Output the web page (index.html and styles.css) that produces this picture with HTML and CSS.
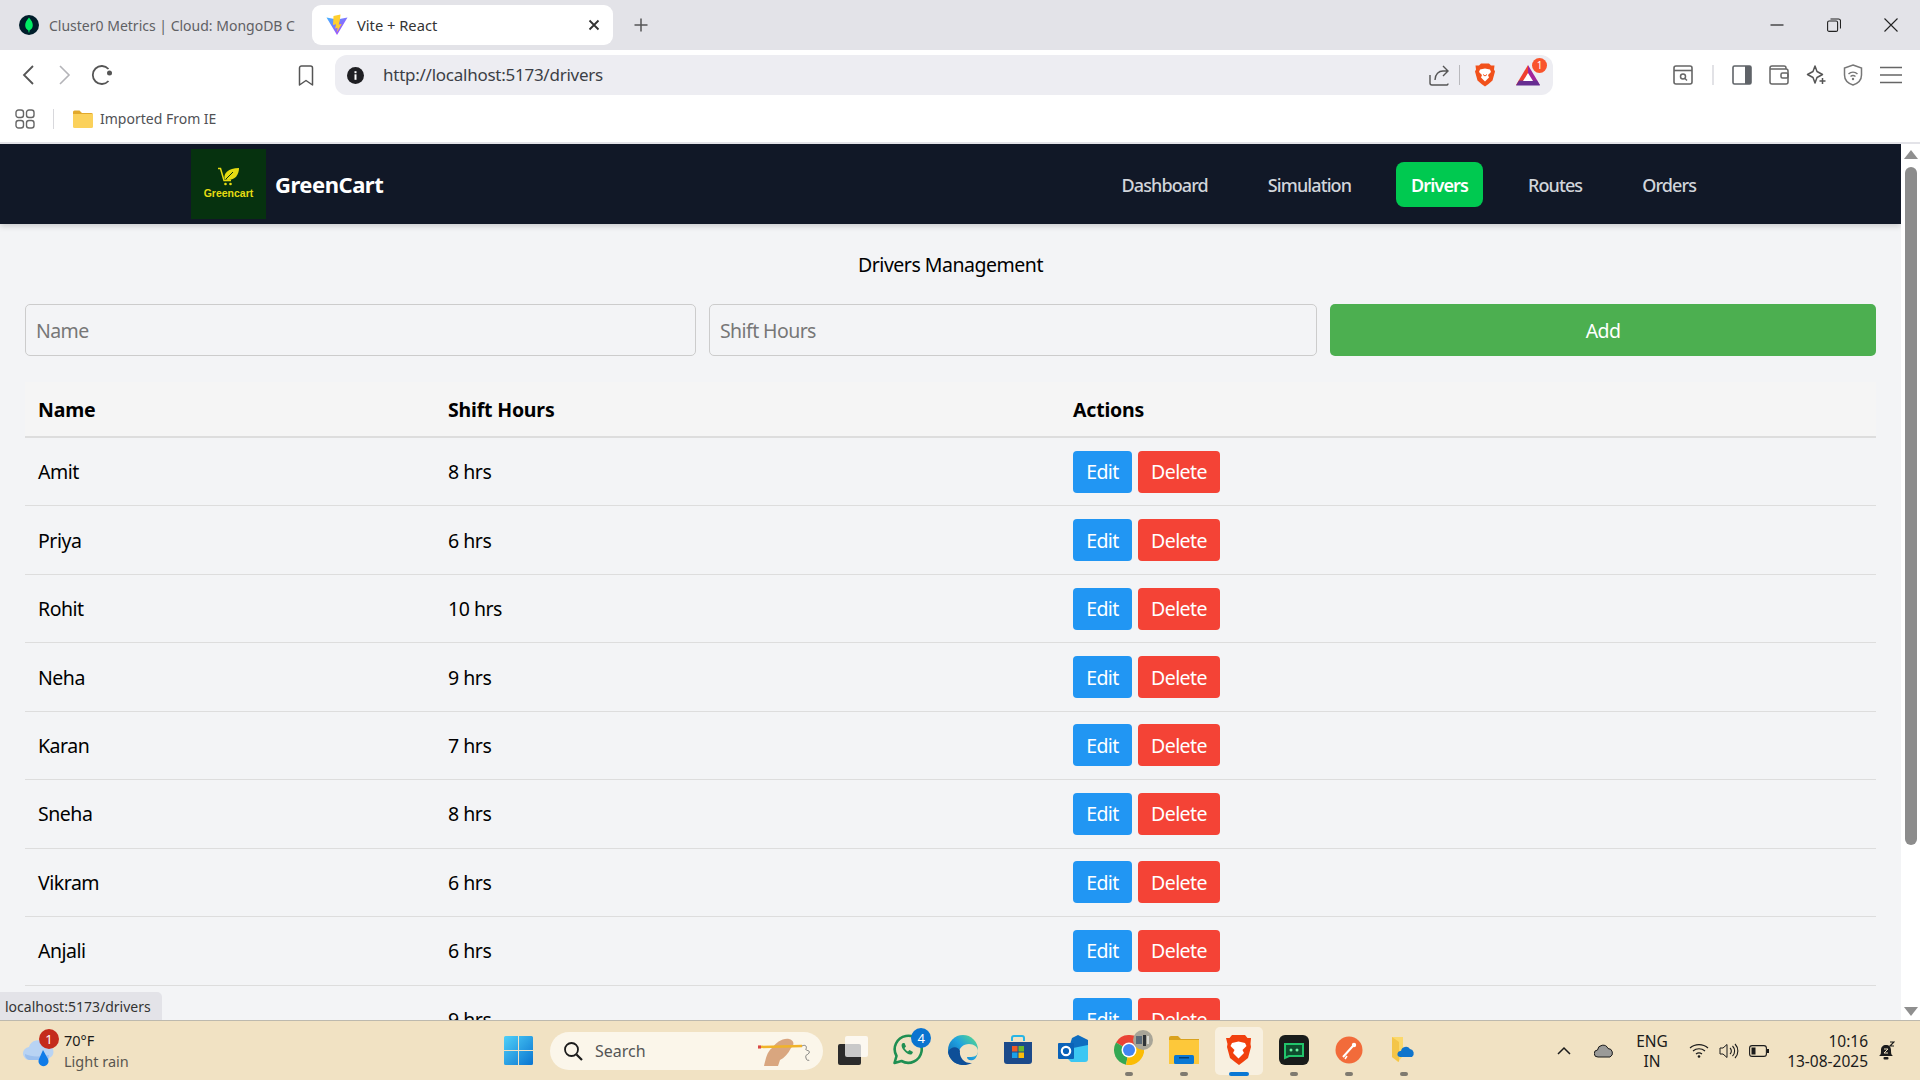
FILE: index.html
```html
<!DOCTYPE html>
<html lang="en">
<head>
<meta charset="utf-8">
<title>Vite + React</title>
<link rel="stylesheet" href="styles.css">
</head>
<body>
<div class="screen">

  <header class="tabstrip">
    <div class="tab tab-inactive">
      <svg class="favicon" width="20" height="20" viewBox="0 0 20 20"><circle cx="10" cy="10" r="10" fill="#001e2b"/><path d="M10 2.500c2.600 3 3.800 5.400 3.800 7.700 0 2.600-1.500 4.300-3.300 5.200l-.2 2.100h-.7l-.2-2.100c-1.800-.9-3.200-2.600-3.200-5.200 0-2.300 1.200-4.700 3.800-7.700z" fill="#00ed64"/></svg>
      <span class="tab-title tab-title-faded">Cluster0 Metrics | Cloud: MongoDB C</span>
    </div>
    <div class="tab tab-active">
      <svg class="favicon" width="22" height="22" viewBox="0 0 22 22"><defs><linearGradient id="vt" x1="0" y1="0" x2="1" y2="1"><stop offset="0" stop-color="#41b5ff"/><stop offset="1" stop-color="#bd34fe"/></linearGradient></defs><path d="M0.500 3.500 11 5.500 21.500 3.500 11 21z" fill="url(#vt)"/><path d="M14.500 0.500 7.500 2 7 11l3-.7-.8 4.200 2.500-.7-1 4.700 5-8.500-3 .6 1.100-4z" fill="#ffcf2e"/></svg>
      <span class="tab-title">Vite + React</span>
      <svg class="tab-close" width="12" height="12" viewBox="0 0 12 12"><path d="M1.500 1.500l9 9M10.500 1.500l-9 9" stroke="#333" stroke-width="1.800" fill="none"/></svg>
    </div>
    <svg class="tab-new" width="16" height="16" viewBox="0 0 16 16"><path d="M8 1.500v13M1.500 8h13" stroke="#555" stroke-width="1.500" fill="none"/></svg>
    <div class="window-controls">
      <svg width="14" height="14" viewBox="0 0 14 14"><path d="M0.500 7h13" stroke="#222" stroke-width="1.200"/></svg>
      <svg width="14" height="14" viewBox="0 0 14 14"><rect x="0.600" y="3" width="10" height="10.400" rx="1.500" stroke="#222" stroke-width="1.100" fill="none"/><path d="M3.500 1h8a2 2 0 0 1 2 2v7.500" stroke="#222" stroke-width="1.100" fill="none"/></svg>
      <svg width="14" height="14" viewBox="0 0 14 14"><path d="M0.500 0.500l13 13M13.500 0.500l-13 13" stroke="#222" stroke-width="1.100" fill="none"/></svg>
    </div>
  </header>

  <div class="toolbar">
    <div class="tool-slot"><svg width="12" height="20" viewBox="0 0 12 20"><path d="M11 1 2 10l9 9" stroke="#555" stroke-width="1.800" fill="none"/></svg></div>
    <div class="tool-slot"><svg width="12" height="20" viewBox="0 0 12 20"><path d="M1 1l9 9-9 9" stroke="#b4b4b8" stroke-width="1.600" fill="none"/></svg></div>
    <div class="tool-slot"><svg width="22" height="22" viewBox="0 0 22 22"><path d="M17.500 5A9 9 0 1 0 17.500 17" stroke="#555" stroke-width="1.800" fill="none"/><circle cx="18.500" cy="9" r="2.500" fill="#555"/></svg></div>
    <div class="tool-slot slot-bookmark"><svg width="16" height="21" viewBox="0 0 16 21"><path d="M1.500 3a2 2 0 0 1 2-2h9a2 2 0 0 1 2 2v17L8 15.500 1.500 20z" stroke="#555" stroke-width="1.500" fill="none" stroke-linejoin="round"/></svg></div>
    <div class="urlbar">
      <svg class="url-info" width="17" height="17" viewBox="0 0 17 17"><circle cx="8.500" cy="8.500" r="8.500" fill="#1f1f23"/><rect x="7.500" y="7.300" width="2" height="5.500" fill="#fff"/><rect x="7.500" y="4.200" width="2" height="2" fill="#fff"/></svg>
      <span class="url-text">http://localhost:5173/drivers</span>
      <svg class="url-share" width="20" height="21" viewBox="0 0 20 21"><path d="M1 10v8a2 2 0 0 0 2 2h15a1.500 1.500 0 0 0 1-1.500" stroke="#555" stroke-width="1.400" fill="none"/><path d="M6 15c0-6 4-9 8-9h4M14 1l5 5-5 5" stroke="#555" stroke-width="1.400" fill="none"/></svg>
      <span class="url-divider"></span>
      <svg class="url-brave" width="20" height="24" viewBox="0 0 20 24"><path d="M6 0.500h8l2 2 3.500 0-.5 4 1 2-2.500 9-4 3.500-3.500 2.500-3.500-2.500-4-3.500L0 8.500l1-2L0.500 2.500 4 2.500z" fill="#f1511b"/><path d="M5 6.500l5-1 5 1 1 2.500-3 3 1 2.500-4 4-4-4 1-2.500-3-3z" fill="#fff"/><path d="M8 11.500l2 1.500 2-1.500" stroke="#f1511b" stroke-width="1" fill="none"/></svg>
      <div class="url-bat">
        <svg width="24" height="21" viewBox="0 0 24 21"><path d="M12 0 0 20h6L12 9z" fill="#f0402f"/><path d="M12 0l12 20h-6L12 9z" fill="#a2239a"/><path d="M0 20.500h24l-3-5H3z" fill="#662d91"/><path d="M12 8l-5 8h10z" fill="#fff"/></svg>
        <span class="bat-badge">1</span>
      </div>
    </div>
    <div class="tool-right">
      <svg width="20" height="20" viewBox="0 0 20 20"><rect x="1" y="1" width="18" height="18" rx="2" stroke="#666" stroke-width="1.600" fill="none"/><path d="M1 5.500h18" stroke="#666" stroke-width="1.600"/><circle cx="10" cy="11.500" r="2.500" stroke="#666" stroke-width="1.500" fill="none"/><path d="M12 13.500l2 2" stroke="#666" stroke-width="1.500"/></svg>
      <span class="tool-divider"></span>
      <svg class="tool-sidebar" width="20" height="20" viewBox="0 0 20 20"><rect x="1" y="1" width="18" height="18" rx="1.500" stroke="#5f6368" stroke-width="1.600" fill="none"/><rect x="13" y="1" width="6" height="18" fill="#5f6368"/></svg>
      <svg width="20" height="20" viewBox="0 0 20 20"><path d="M17 4V3a2 2 0 0 0-2-2H3a2 2 0 0 0-2 2v14a2 2 0 0 0 2 2h14a2 2 0 0 0 2-2V6a2 2 0 0 0-2-2H1" stroke="#666" stroke-width="1.500" fill="none"/><rect x="12" y="8" width="7" height="5" rx="1.500" stroke="#666" stroke-width="1.500" fill="none"/></svg>
      <svg width="20" height="20" viewBox="0 0 20 20"><path d="M9 1l2 5.500 5.500 3-5.500 3L9 18l-2-5.500-5.500-3L7 6.500z" stroke="#555" stroke-width="1.500" fill="none" stroke-linejoin="round"/><path d="M16.500 13v6M13.500 16h6" stroke="#555" stroke-width="1.500"/></svg>
      <svg width="20" height="22" viewBox="0 0 20 22"><path d="M10 1l8.500 3v7c0 5-4 8.500-8.500 10C5.500 19.500 1.500 16 1.500 11V4z" stroke="#777" stroke-width="1.500" fill="none"/><path d="M5.500 10c2.500-2.500 6.500-2.500 9 0M7.500 12.500c1.500-1.300 3.500-1.300 5 0" stroke="#777" stroke-width="1.400" fill="none"/><circle cx="10" cy="15" r="1.200" fill="#777"/></svg>
      <svg width="22" height="18" viewBox="0 0 22 18"><path d="M0 1.500h22M0 9h22M0 16.500h22" stroke="#666" stroke-width="1.600"/></svg>
    </div>
  </div>

  <div class="bookmarks">
    <svg class="apps" width="20" height="20" viewBox="0 0 20 20"><g stroke="#666" stroke-width="1.400" fill="none"><rect x="1" y="1" width="7.500" height="7.500" rx="2.500"/><rect x="11.500" y="1" width="7.500" height="7.500" rx="2.500"/><rect x="1" y="11.500" width="7.500" height="7.500" rx="2.500"/><rect x="11.500" y="11.500" width="7.500" height="7.500" rx="2.500"/></g></svg>
    <span class="bm-divider"></span>
    <svg width="20" height="18" viewBox="0 0 20 18"><path d="M0 2a1.500 1.500 0 0 1 1.500-1.500h5L9 3h9.500A1.500 1.500 0 0 1 20 4.500V6H0z" fill="#e2a92c"/><path d="M0 4h20v12.500a1.500 1.500 0 0 1-1.500 1.500h-17A1.500 1.500 0 0 1 0 16.500z" fill="#fbd15b"/></svg>
    <span class="bm-label">Imported From IE</span>
  </div>

  <div class="viewport">
    <div class="page">
      <nav class="nav">
        <div class="brand">
          <div class="logo">
            <svg width="24" height="20" viewBox="0 0 24 20"><path d="M1 1.500h2.500l3.500 12h7" stroke="#e6dc12" stroke-width="1.500" fill="none"/><path d="M7.500 12C6.500 6 11 1.500 22 1c0 7-4 12-11 12z" fill="#e6dc12"/><path d="M9 12l7-7" stroke="#06320f" stroke-width="1"/><circle cx="8.500" cy="17" r="1.300" fill="#e6dc12"/><circle cx="13.500" cy="17" r="1.300" fill="#e6dc12"/></svg>
            <span class="logo-text">Greencart</span>
          </div>
          <span class="brand-name">GreenCart</span>
        </div>
        <ul class="nav-links">
          <li><a class="nav-link">Dashboard</a></li>
          <li><a class="nav-link">Simulation</a></li>
          <li><a class="nav-link is-active">Drivers</a></li>
          <li><a class="nav-link">Routes</a></li>
          <li><a class="nav-link">Orders</a></li>
        </ul>
      </nav>
      <main class="content">
        <h1 class="title">Drivers Management</h1>
        <form class="driver-form">
          <input class="field" placeholder="Name">
          <input class="field" placeholder="Shift Hours">
          <button class="add-btn" type="button">Add</button>
        </form>
        <table class="drivers">
          <colgroup><col class="col-name"><col class="col-hours"><col class="col-actions"></colgroup>
          <thead><tr><th>Name</th><th>Shift Hours</th><th>Actions</th></tr></thead>
          <tbody>
            <tr><td>Amit</td><td>8 hrs</td><td><button class="btn btn-edit">Edit</button><button class="btn btn-del">Delete</button></td></tr>
            <tr><td>Priya</td><td>6 hrs</td><td><button class="btn btn-edit">Edit</button><button class="btn btn-del">Delete</button></td></tr>
            <tr><td>Rohit</td><td>10 hrs</td><td><button class="btn btn-edit">Edit</button><button class="btn btn-del">Delete</button></td></tr>
            <tr><td>Neha</td><td>9 hrs</td><td><button class="btn btn-edit">Edit</button><button class="btn btn-del">Delete</button></td></tr>
            <tr><td>Karan</td><td>7 hrs</td><td><button class="btn btn-edit">Edit</button><button class="btn btn-del">Delete</button></td></tr>
            <tr><td>Sneha</td><td>8 hrs</td><td><button class="btn btn-edit">Edit</button><button class="btn btn-del">Delete</button></td></tr>
            <tr><td>Vikram</td><td>6 hrs</td><td><button class="btn btn-edit">Edit</button><button class="btn btn-del">Delete</button></td></tr>
            <tr><td>Anjali</td><td>6 hrs</td><td><button class="btn btn-edit">Edit</button><button class="btn btn-del">Delete</button></td></tr>
            <tr><td></td><td>9 hrs</td><td><button class="btn btn-edit">Edit</button><button class="btn btn-del">Delete</button></td></tr>
          </tbody>
        </table>
      </main>
    </div>
    <div class="scrollbar">
      <svg width="14" height="10" viewBox="0 0 14 10"><path d="M7 0l7 9H0z" fill="#8f8f8f"/></svg>
      <div class="scroll-thumb"></div>
      <svg class="scroll-down" width="14" height="10" viewBox="0 0 14 10"><path d="M0 0h14L7 9z" fill="#8f8f8f"/></svg>
    </div>
    <div class="status-bubble">localhost:5173/drivers</div>
  </div>

  <footer class="taskbar">
    <div class="weather">
      <div class="weather-icon">
        <svg width="33" height="36" viewBox="0 0 33 36"><path d="M7 27a6.500 6.500 0 0 1-1-13 9 9 0 0 1 16-3 7.500 7.500 0 0 1 4.500 14l-2 2z" fill="#b8d3f3"/><path d="M6 27a6 6 0 0 1-4-6c6 3 15 3 24 1l-1 5z" fill="#9cc0ee"/><path d="M20 17l5 9a5 5 0 1 1-9 0z" fill="#0f7be8"/></svg>
        <span class="weather-badge">1</span>
      </div>
      <div class="weather-text"><span class="temp">70°F</span><span class="cond">Light rain</span></div>
    </div>
    <svg class="winlogo" width="29" height="29" viewBox="0 0 29 29"><defs><linearGradient id="wl" x1="0" y1="0" x2="1" y2="1"><stop offset="0" stop-color="#4fd0f8"/><stop offset="1" stop-color="#0a74d0"/></linearGradient></defs><path d="M0 1.500A1.500 1.500 0 0 1 1.500 0H14v14H0zM15 0h12.500A1.500 1.500 0 0 1 29 1.500V14H15zM0 15h14v14H1.500A1.500 1.500 0 0 1 0 27.500zM15 15h14v12.500a1.500 1.500 0 0 1-1.500 1.500H15z" fill="url(#wl)"/></svg>
    <div class="search">
      <svg width="20" height="20" viewBox="0 0 20 20"><circle cx="8.500" cy="8.500" r="6.500" stroke="#1b1b1b" stroke-width="1.800" fill="none"/><path d="M13.500 13.500l5.500 5.500" stroke="#1b1b1b" stroke-width="2.200"/></svg>
      <span class="search-label">Search</span>
      <svg class="search-art" width="56" height="30" viewBox="0 0 56 30"><path d="M6 30C8 22 9 16 14 12 18 7 24 2 31 3c5 1 6 6 2 9-3 6-7 10-11 12l-2 6z" fill="#d9a67f"/><path d="M0 11l44-1" stroke="#f0b32a" stroke-width="2.500"/><path d="M0 11h3" stroke="#d8464a" stroke-width="3"/><path d="M44 10c4-2 5 1 4 3s5 1 3 4-4 1-3 5 3 1 3 3" stroke="#666" stroke-width=".8" fill="none"/></svg>
    </div>
    <div class="dock">
      <div class="dock-item">
        <svg width="30" height="30" viewBox="0 0 30 30"><rect x="0" y="9" width="23" height="21" rx="2" fill="#2b2b2b"/><rect x="7" y="1" width="23" height="21" rx="2" fill="#fff" opacity=".75"/></svg>
      </div>
      <div class="dock-item">
        <svg width="31" height="31" viewBox="0 0 31 31"><path d="M2.500 29l2-7A13.500 13.500 0 1 1 9.500 27z" stroke="#1f8f52" stroke-width="2.600" fill="none" stroke-linejoin="round"/><path d="M11 9c-2 1-2 4 1 7.500s6 5 8 3.500l1-2-3.500-2-1.500 1.500c-1.500-.5-3-2.500-3.500-3.500L14 12.500 12.500 9z" fill="#1f8f52"/></svg>
        <span class="wa-badge">4</span>
      </div>
      <div class="dock-item">
        <svg width="30" height="30" viewBox="0 0 30 30"><defs><linearGradient id="ed" x1="0" y1="1" x2="1" y2="0"><stop offset="0" stop-color="#0c59a4"/><stop offset=".55" stop-color="#1fa2e0"/><stop offset="1" stop-color="#5fe07f"/></linearGradient></defs><circle cx="15" cy="15" r="15" fill="url(#ed)"/><path d="M30 16c0-4-4-7-9-7-6 0-10 4-10 9 0 6 5 12 13 11l6-6-5 2c-4 1-6-1-6-3 4 0 11 1 11-6z" fill="#f1e2c3"/><path d="M12 16c-1 6 4 13 12 12-9 5-22 1-24-11 3-6 10-6 12-1z" fill="#0e4f98"/></svg>
      </div>
      <div class="dock-item">
        <svg width="30" height="30" viewBox="0 0 30 30"><path d="M9 6V3a2 2 0 0 1 2-2h8a2 2 0 0 1 2 2v3" stroke="#27b5e5" stroke-width="2" fill="none"/><path d="M1 7h28v19a3 3 0 0 1-3 3H4a3 3 0 0 1-3-3z" fill="#1c4a8a"/><rect x="9" y="11" width="5.500" height="5.500" fill="#ee5a24"/><rect x="15.500" y="11" width="5.500" height="5.500" fill="#6ab82c"/><rect x="9" y="17.500" width="5.500" height="5.500" fill="#1aa0e8"/><rect x="15.500" y="17.500" width="5.500" height="5.500" fill="#fbbc09"/></svg>
      </div>
      <div class="dock-item">
        <svg width="30" height="30" viewBox="0 0 30 30"><path d="M14 3l6-3 10 5v8l-20 3z" fill="#0f6dbf"/><path d="M10 14l20-4v14a3 3 0 0 1-3 3H13l-3-3z" fill="#3cc7f3"/><rect x="0" y="8" width="16" height="16" rx="1" fill="#0a62b8"/><circle cx="8" cy="16" r="4.200" stroke="#fff" stroke-width="2.200" fill="none"/></svg>
      </div>
      <div class="dock-item">
        <svg width="30" height="30" viewBox="0 0 30 30"><path d="M15 15L2 7.500A15 15 0 0 1 28 7.500z" fill="#ea4335"/><path d="M15 15L2 7.500A15 15 0 0 0 12 29.700z" fill="#34a853"/><path d="M15 15l13-7.500A15 15 0 0 1 12 29.700z" fill="#fbbc05"/><circle cx="15" cy="15" r="7.500" fill="#fff"/><circle cx="15" cy="15" r="6" fill="#4285f4"/></svg>
        <svg class="chrome-avatar" width="20" height="20" viewBox="0 0 20 20"><circle cx="10" cy="10" r="10" fill="#a8a598"/><rect x="3" y="6" width="6" height="8" fill="#5b6a78"/><rect x="10" y="5" width="3" height="11" fill="#2e3338"/><rect x="14" y="6" width="2" height="8" fill="#d9d9d2"/></svg>
        <span class="dock-dot"></span>
      </div>
      <div class="dock-item">
        <svg width="30" height="28" viewBox="0 0 30 28"><path d="M0 2a2 2 0 0 1 2-2h7l3 3h18v5H0z" fill="#d9a21e"/><path d="M0 4h30v24H0z" fill="#fdc83a"/><rect x="5" y="19" width="20" height="9" rx="1.500" fill="#0a78d4"/><rect x="10" y="21" width="10" height="1.500" fill="#063f73"/></svg>
        <span class="dock-dot"></span>
      </div>
      <div class="dock-item is-running">
        <svg width="25" height="30" viewBox="0 0 25 30"><path d="M6 0h13l2.500 3 3.500 0-.5 6 .5 3-3 11-5 4-4 3-4-3-5-4-3-11 .5-3L0 3h3.500z" fill="#f1400e"/><path d="M6 8l6.500-1.500L19 8l1.500 3-4 4 1.500 3-5.500 5.500L7 18l1.500-3-4-4z" fill="#fff"/></svg>
        <span class="dock-active"></span>
      </div>
      <div class="dock-item">
        <svg width="30" height="30" viewBox="0 0 30 30"><rect width="30" height="30" rx="6" fill="#191c1b"/><path d="M6 9h18v12H10l-4 2z" stroke="#21c46b" stroke-width="2" fill="#0e4d2e"/><circle cx="12" cy="15" r="1.500" fill="#6ff3a3"/><circle cx="18" cy="15" r="1.500" fill="#6ff3a3"/></svg>
        <span class="dock-dot"></span>
      </div>
      <div class="dock-item">
        <svg width="28" height="28" viewBox="0 0 28 28"><circle cx="14" cy="14" r="13.500" fill="#f26b3a"/><path d="M8 21l9-10 3-3" stroke="#fff" stroke-width="2" fill="none"/><circle cx="19" cy="9" r="2.200" fill="#fff"/><path d="M12 20l-2 3" stroke="#fff" stroke-width="1.500"/></svg>
        <span class="dock-dot"></span>
      </div>
      <div class="dock-item">
        <svg width="24" height="26" viewBox="0 0 24 26"><path d="M0 0h11v19l-5 6-6-5z" fill="#fbd86b"/><path d="M0 0l7 5v20l-7-5z" fill="#f4c548"/><path d="M8 20a3 3 0 0 1 1-6 5 5 0 0 1 9-2 4.500 4.500 0 0 1 2 8z" fill="#0f74cc"/></svg>
        <span class="dock-dot"></span>
      </div>
    </div>
    <div class="tray">
      <svg width="14" height="9" viewBox="0 0 14 9"><path d="M1 8l6-6 6 6" stroke="#1b1b1b" stroke-width="1.500" fill="none"/></svg>
      <svg class="tray-cloud" width="20" height="14" viewBox="0 0 20 14"><path d="M4 13a3.500 3.500 0 0 1-.5-7A5.500 5.500 0 0 1 14 4.500 4.500 4.500 0 0 1 16 13z" fill="#9a9a98" stroke="#1b1b1b" stroke-width="1"/></svg>
      <div class="tray-lang"><span>ENG</span><span>IN</span></div>
      <svg class="tray-wifi" width="20" height="15" viewBox="0 0 20 15"><path d="M1 5c5-4.500 13-4.500 18 0M4 8c3.500-3 8.500-3 12 0M7 11c2-1.500 4-1.500 6 0" stroke="#1b1b1b" stroke-width="1.200" fill="none"/><circle cx="10" cy="13.500" r="1.300" fill="#1b1b1b"/></svg>
      <svg class="tray-sound" width="20" height="16" viewBox="0 0 20 16"><path d="M1 5h3l4-3.500v13L4 11H1z" stroke="#1b1b1b" stroke-width="1" fill="none"/><path d="M11 5a4 4 0 0 1 0 6M13.500 3a7 7 0 0 1 0 10M16 1a10 10 0 0 1 0 14" stroke="#1b1b1b" stroke-width="1.100" fill="none"/></svg>
      <svg class="tray-batt" width="20" height="12" viewBox="0 0 20 12"><rect x=".6" y=".6" width="16.800" height="10.800" rx="2.500" stroke="#1b1b1b" stroke-width="1.100" fill="none"/><rect x="2.500" y="2.500" width="4" height="7" fill="#1b1b1b"/><rect x="18" y="4" width="2" height="4" fill="#1b1b1b"/></svg>
      <div class="tray-clock"><span>10:16</span><span>13-08-2025</span></div>
      <svg class="tray-bell" width="17" height="20" viewBox="0 0 17 20"><path d="M1 15c2-1 2-3 2-6 0-3 2-5 5-5s5 2 5 5c0 3 0 5 2 6z" fill="#1b1b1b"/><rect x="5.500" y="16" width="5" height="2.500" rx="1" fill="#1b1b1b"/><path d="M6 8h4l-4 4h4" stroke="#f1e2c3" stroke-width="1" fill="none"/><path d="M12 1h4l-4 4h4" stroke="#1b1b1b" stroke-width="1.200" fill="none"/></svg>
    </div>
  </footer>
</div>
</body>
</html>
```
FILE: styles.css
```css
* { box-sizing: border-box; }
html, body { margin: 0; padding: 0; height: 100%; overflow: hidden; }
body { font-family: "Noto Sans", "Open Sans", sans-serif; color: #000; letter-spacing: -0.03em; }
svg { display: block; flex: none; }
.screen { width: 1920px; height: 1080px; display: flex; flex-direction: column; overflow: hidden; background: #fff; }

/* browser chrome */
.tabstrip, .toolbar, .bookmarks, .status-bubble, .taskbar { letter-spacing: 0; }
.tabstrip { height: 50px; flex: none; background: #e3e3e8; display: flex; align-items: center; padding-left: 19px; position: relative; }
.tab { display: flex; align-items: center; font-size: 14px; }
.tab-inactive { width: 293px; color: #5f6064; }
.tab-title { white-space: nowrap; }
.tab-inactive .favicon { margin-right: 10px; }
.tab-title-faded { width: 246px; overflow: hidden; }
.tab-active { width: 301px; height: 40px; background: #fff; border-radius: 9px; padding: 0 14px; color: #333; font-size: 14.7px; }
.tab-active .favicon { margin-right: 9px; }
.tab-close { margin-left: auto; margin-right: -1px; }
.tab-new { margin-left: 20px; }
.window-controls { margin-left: auto; display: flex; gap: 43px; padding-right: 22px; }

.toolbar { height: 46px; flex: none; display: flex; align-items: center; padding: 4px 0 0 9px; }
.tool-slot { width: 37px; display: flex; justify-content: center; }
.slot-bookmark { margin-left: 167px; }
.urlbar { margin-left: 11px; width: 1218px; height: 40px; background: #ededf2; border-radius: 12px; display: flex; align-items: center; padding-left: 12px; }
.url-text { margin-left: 19px; font-size: 17px; letter-spacing: -0.015em; color: #3c3f46; padding-bottom: 1px; }
.url-share { margin-left: auto; }
.url-divider { width: 1px; height: 20px; background: #b9b9bd; margin: 0 15px 0 10px; }
.url-bat { margin: 0 13px 0 21px; position: relative; }
.bat-badge { position: absolute; right: -7px; top: -7px; width: 15px; height: 15px; border-radius: 50%; background: #f9542c; color: #fff; font-size: 10px; display: flex; align-items: center; justify-content: center; }
.tool-right { display: flex; align-items: center; margin-left: 120px; gap: 17px; }
.tool-divider { width: 2px; height: 20px; background: #e2e2e6; margin: 0 0 0 2px; }
.tool-sidebar { margin-left: 1px; }

.bookmarks { height: 48px; flex: none; display: flex; align-items: center; padding-left: 15px; border-bottom: 2px solid #e3e3e8; font-size: 14px; color: #505155; }
.bm-divider { width: 1px; height: 20px; background: #d8d8dc; margin: 0 19px 0 18px; }
.bm-label { margin-left: 7px; padding-bottom: 2px; }

/* page */
.viewport { flex: 1; min-height: 0; display: flex; position: relative; overflow: hidden; }
.page { width: 1901px; flex: none; background: #f3f4f6; overflow: hidden; }
.nav { height: 80px; background: #111827; display: flex; align-items: center; justify-content: space-between; padding: 0 190px 0 191px; box-shadow: 0 2px 6px rgba(0,0,0,.18); position: relative; }
.brand { display: flex; align-items: center; gap: 9px; }
.logo { width: 75px; height: 70px; background: #06320f; display: flex; flex-direction: column; align-items: center; justify-content: center; padding-bottom: 3px; }
.logo-text { font-size: 10.5px; line-height: 12px; font-weight: 700; color: #e6dc12; letter-spacing: 0; font-family: "Liberation Sans", sans-serif; }
.brand-name { color: #fff; font-size: 22px; font-weight: 700; }
.nav-links { list-style: none; margin: 0; padding: 0; display: flex; gap: 30px; }
.nav-link { display: block; padding: 0 15px; height: 45px; line-height: 47px; border-radius: 8px; color: #d1d5db; font-size: 18px; font-weight: 500; letter-spacing: -0.05em; }
.nav-link.is-active { background: #00c950; color: #fff; font-weight: 600; }

.content { padding: 0 25px; }
.title { margin: 0; height: 80px; display: flex; align-items: center; justify-content: center; font-size: 19.5px; font-weight: 400; color: #000; padding-top: 1px; }
.driver-form { display: grid; grid-template-columns: 671fr 608fr 546fr; gap: 13px; height: 52px; margin-bottom: 26px; }
.field { border: 1px solid #ccc; border-radius: 5px; background: transparent; padding: 0 10px; font: inherit; font-size: 19.5px; letter-spacing: -0.03em; }
.field::placeholder { color: #777; opacity: 1; }
.add-btn { border: 0; border-radius: 5px; background: #4caf50; color: #fff; font: inherit; font-size: 19.5px; letter-spacing: -0.03em; }

.drivers { width: 1851px; table-layout: fixed; border-collapse: separate; border-spacing: 0; font-size: 19.5px; }
.col-name { width: 410px; }
.col-hours { width: 625px; }
.drivers th { height: 56px; text-align: left; padding: 0 13px; background: #f5f5f5; border-bottom: 2px solid #ddd; font-weight: 700; letter-spacing: -0.01em; }
.drivers td { height: 68.45px; padding: 0 13px; border-bottom: 1px solid #ddd; }
.btn { height: 42px; border: 0; border-radius: 4px; color: #fff; font: inherit; letter-spacing: -0.03em; padding: 0; vertical-align: middle; }
.btn-edit { width: 59px; background: #2196f3; margin-right: 6px; }
.btn-del { width: 82px; background: #f44336; }

.scrollbar { flex: 1; background: #fff; display: flex; flex-direction: column; align-items: center; padding-top: 6px; position: relative; }
.scroll-thumb { width: 12px; height: 678px; margin-top: 7px; border-radius: 6px; background: #8c8c8c; }
.scroll-down { margin-top: auto; margin-bottom: 3px; }
.status-bubble { position: absolute; left: 0; bottom: 0; width: 162px; height: 28px; background: #e3e3e8; border-radius: 0 5px 0 0; font-size: 14px; color: #333; display: flex; align-items: center; padding-left: 5px; }

/* taskbar */
.taskbar { height: 60px; flex: none; background: #f1e2c3; border-top: 1px solid #bdb9ae; display: flex; align-items: center; color: #1b1b1b; font-size: 14.5px; position: relative; }
.weather { width: 504px; display: flex; align-items: center; padding-left: 23px; }
.weather-icon { position: relative; }
.weather-badge { position: absolute; left: 16px; top: -4px; width: 20px; height: 20px; border-radius: 50%; background: #c42b1c; color: #fff; font-size: 13px; display: flex; align-items: center; justify-content: center; }
.weather-text { display: flex; flex-direction: column; margin-left: 8px; line-height: 21px; }
.cond { color: #5a5650; }
.search { width: 273px; height: 38px; margin-left: 17px; border-radius: 19px; background: #fbf6ea; display: flex; align-items: center; padding-left: 13px; }
.search-label { margin-left: 12px; font-size: 16px; color: #555; }
.search-art { margin-left: auto; margin-right: 9px; }
.dock { display: flex; margin-left: 2px; }
.dock-item { width: 55.2px; height: 48px; position: relative; display: flex; align-items: center; justify-content: center; padding-bottom: 2px; }
.dock-item.is-running { background: #f8f0e0; border-radius: 5px; width: 48px; margin: 0 3.600px; }
.dock-dot { position: absolute; bottom: -1px; left: 50%; margin-left: -4px; width: 8px; height: 4px; border-radius: 2px; background: #7f7a70; }
.dock-active { position: absolute; bottom: -1px; left: 50%; margin-left: -10px; width: 20px; height: 4px; border-radius: 2px; background: #0a78d4; }
.wa-badge { position: absolute; left: 31px; top: 1px; width: 20px; height: 20px; border-radius: 50%; background: #0a74d0; color: #fff; font-size: 13px; display: flex; align-items: center; justify-content: center; }
.chrome-avatar { position: absolute; left: 32px; top: 3px; }
.tray { display: flex; align-items: center; margin-left: 125px; font-size: 15.5px; }
.tray-cloud { margin-left: 23px; }
.tray-lang { width: 44px; margin-left: 16px; display: flex; flex-direction: column; align-items: center; line-height: 20px; }
.tray-wifi { margin-left: 15px; }
.tray-sound { margin-left: 10px; }
.tray-batt { margin-left: 10px; }
.tray-clock { width: 91px; display: flex; flex-direction: column; align-items: flex-end; line-height: 20px; margin-left: 8px; }
.tray-bell { margin-left: 10px; }
```
